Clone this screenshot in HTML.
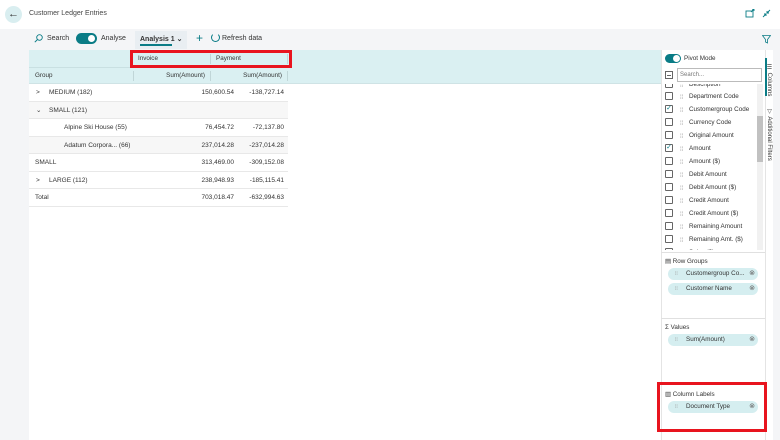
<!DOCTYPE html><html><head><style>
*{box-sizing:border-box;margin:0;padding:0}
body{width:780px;height:440px;overflow:hidden;background:#f4f5f7;font-family:"Liberation Sans",sans-serif;font-size:7px;color:#333;position:relative}
.a{position:absolute}
.hdr{left:0;top:0;width:780px;height:29px;background:#fff}
.grid{left:29px;top:50px;width:632px;height:390px;background:#fff}
.th{background:#daf0f2}
.row{position:absolute;left:29px;width:259px;height:17.5px;border-bottom:1px solid #e8e8e8;font-size:6.5px;line-height:17px}
.row span{position:absolute}
.r1{right:183px;text-align:right} .c1{position:absolute;left:105px;width:100px;text-align:right}
.c2{position:absolute;left:182px;width:73px;text-align:right}
.side{left:661px;top:50px;width:104px;height:390px;background:#fff;border-left:1px solid #e4e4e4}
.it{position:absolute;left:4px;height:13px;font-size:6.3px;line-height:10px}
.cb{position:absolute;left:0;top:0;width:8px;height:8px;border:1px solid #666;border-radius:1px;background:#fff}
.dot{position:absolute;left:15px;top:1px;color:#999;font-size:6px}
.lbl{position:absolute;left:24px;white-space:nowrap}
.chip{position:absolute;left:668px;width:90px;height:12px;border-radius:6px;background:#d5eef0;font-size:6.3px;line-height:12px;padding-left:18px}
.chip:before{content:"⁞⁞";position:absolute;left:7px;color:#999;font-size:5px}
.chip:after{content:"⊗";position:absolute;right:3px;color:#666;font-size:7px}
.red{border:3px solid #e8141e}
</style></head><body>
<div class="a hdr"></div>
<div class="a" style="left:5px;top:6px;width:17px;height:17px;border-radius:50%;background:#d9eef0;text-align:center;line-height:16px;font-size:11px;color:#333">←</div>
<div class="a" style="left:29px;top:10px;font-size:7px;color:#444">Customer Ledger Entries</div>
<svg class="a" style="left:745px;top:9px" width="10" height="9"><rect x="1" y="2" width="7" height="6" fill="none" stroke="#0a7c86" stroke-width="0.9"/><path d="M6 3L9 0M7 0H9V2" stroke="#0a7c86" stroke-width="0.9" fill="none"/></svg>
<svg class="a" style="left:762px;top:9px" width="9" height="9"><path d="M1 8L4 5M2 5H4V7M8 1L5 4M5 2V4H7" stroke="#0a7c86" stroke-width="0.9" fill="none"/></svg>
<!-- toolbar -->
<svg class="a" style="left:34px;top:34px" width="9" height="9"><circle cx="5.5" cy="3.5" r="2.8" fill="none" stroke="#0a7c86" stroke-width="0.9"/><path d="M3.5 5.5L0.8 8.2" stroke="#0a7c86"/></svg>
<div class="a" style="left:47px;top:35px;font-size:7px">Search</div>
<div class="a" style="left:76px;top:33px;width:21px;height:11px;border-radius:6px;background:#0a7c86"></div>
<div class="a" style="left:88px;top:35px;width:7px;height:7px;border-radius:50%;background:#fff"></div>
<div class="a" style="left:101px;top:35px;font-size:7px">Analyse</div>
<div class="a" style="left:135px;top:31px;width:52px;height:18px;background:#e9eef2"></div>
<div class="a" style="left:140px;top:35px;font-size:7px;font-weight:bold">Analysis 1 ⌄</div>
<div class="a" style="left:140px;top:44px;width:32px;height:2px;background:#0a7c86"></div>
<div class="a" style="left:196px;top:31px;font-size:12px;color:#0a7c86">+</div>
<div class="a" style="left:211px;top:33px;width:9px;height:9px;border:1px solid #0a7c86;border-radius:50%;border-top-color:transparent"></div>
<div class="a" style="left:222px;top:35px;font-size:7px">Refresh data</div>
<svg class="a" style="left:762px;top:35px" width="9" height="9"><path d="M0.5 0.5H8.5L5.5 4.5V8L3.5 7V4.5Z" fill="none" stroke="#0a7c86" stroke-width="0.8"/></svg>
<!-- grid -->
<div class="a grid"></div>
<div class="a th" style="left:29px;top:50px;width:632px;height:34px;border-bottom:1px solid #cfe3e5"></div>
<div class="a" style="left:29px;top:67px;width:259px;height:1px;background:#c9e0e2"></div>
<div class="a" style="left:138px;top:55px;font-size:6.3px">Invoice</div>
<div class="a" style="left:210px;top:54px;width:1px;height:10px;background:#c0d6d8"></div>
<div class="a" style="left:216px;top:55px;font-size:6.3px">Payment</div>
<div class="a" style="left:287px;top:54px;width:1px;height:10px;background:#c0d6d8"></div>
<div class="a" style="left:35px;top:72px;font-size:6.3px">Group</div>
<div class="a" style="left:133px;top:71px;width:1px;height:10px;background:#c0d6d8"></div>
<div class="a" style="left:140px;top:72px;width:65px;text-align:right;font-size:6.3px">Sum(Amount)</div>
<div class="a" style="left:210px;top:71px;width:1px;height:10px;background:#c0d6d8"></div>
<div class="a" style="left:215px;top:72px;width:67px;text-align:right;font-size:6.3px">Sum(Amount)</div>
<div class="a" style="left:287px;top:71px;width:1px;height:10px;background:#c0d6d8"></div>
<div class="row" style="top:84px"><span style="left:7px">&gt;</span><span style="left:20px">MEDIUM (182)</span><span class="c1">150,600.54</span><span class="c2">-138,727.14</span></div>
<div class="row" style="top:101.5px;background:#f7f7f7"><span style="left:7px">⌄</span><span style="left:20px">SMALL (121)</span></div>
<div class="row" style="top:119px"><span style="left:35px">Alpine Ski House (55)</span><span class="c1">76,454.72</span><span class="c2">-72,137.80</span></div>
<div class="row" style="top:136.5px;background:#f7f7f7"><span style="left:35px">Adatum Corpora... (66)</span><span class="c1">237,014.28</span><span class="c2">-237,014.28</span></div>
<div class="row" style="top:154px"><span style="left:6px">SMALL</span><span class="c1">313,469.00</span><span class="c2">-309,152.08</span></div>
<div class="row" style="top:171.5px"><span style="left:7px">&gt;</span><span style="left:20px">LARGE (112)</span><span class="c1">238,948.93</span><span class="c2">-185,115.41</span></div>
<div class="row" style="top:189px"><span style="left:6px">Total</span><span class="c1">703,018.47</span><span class="c2">-632,994.63</span></div>
<div class="a red" style="left:130px;top:50px;width:162px;height:18px"></div>
<!-- side -->
<div class="a side"></div>
<div class="a" style="left:765px;top:50px;width:8px;height:390px;background:#fff;border-left:1px solid #e4e4e4"></div>
<div class="a" style="left:765px;top:58px;width:2px;height:38px;background:#0a7c86"></div>
<div class="a" style="left:766px;top:64px;writing-mode:vertical-rl;font-size:6px">☰ Columns</div>
<div class="a" style="left:766px;top:108px;writing-mode:vertical-rl;font-size:6px">▽ Additional Filters</div>
<div class="a" style="left:665px;top:54px;width:16px;height:9px;border-radius:5px;background:#0a7c86"></div>
<div class="a" style="left:673px;top:55px;width:7px;height:7px;border-radius:50%;background:#fff"></div>
<div class="a" style="left:684px;top:55px;font-size:6.3px">Pivot Mode</div>
<div class="a" style="left:665px;top:71px;width:8px;height:8px;border:1px solid #666"></div>
<div class="a" style="left:667px;top:74.5px;width:4px;height:1px;background:#666"></div>
<div class="a" style="left:677px;top:68px;width:85px;height:14px;border:1px solid #bbb;font-size:6px;color:#777;padding:3px 2px">Search...</div>
<div class="a" style="left:661px;top:84px;width:96px;height:166px;overflow:hidden">
<div class="it" style="top:-4px"><div class="cb"></div><span class="dot">⁞⁞</span><span class="lbl">Description</span></div>
<div class="it" style="top:8px"><div class="cb"></div><span class="dot">⁞⁞</span><span class="lbl">Department Code</span></div>
<div class="it" style="top:21px"><div class="cb" style="color:#0a7c86;font-size:7px;line-height:6px;text-align:center">✓</div><span class="dot">⁞⁞</span><span class="lbl">Customergroup Code</span></div>
<div class="it" style="top:34px"><div class="cb"></div><span class="dot">⁞⁞</span><span class="lbl">Currency Code</span></div>
<div class="it" style="top:47px"><div class="cb"></div><span class="dot">⁞⁞</span><span class="lbl">Original Amount</span></div>
<div class="it" style="top:60px"><div class="cb" style="color:#0a7c86;font-size:7px;line-height:6px;text-align:center">✓</div><span class="dot">⁞⁞</span><span class="lbl">Amount</span></div>
<div class="it" style="top:73px"><div class="cb"></div><span class="dot">⁞⁞</span><span class="lbl">Amount ($)</span></div>
<div class="it" style="top:86px"><div class="cb"></div><span class="dot">⁞⁞</span><span class="lbl">Debit Amount</span></div>
<div class="it" style="top:99px"><div class="cb"></div><span class="dot">⁞⁞</span><span class="lbl">Debit Amount ($)</span></div>
<div class="it" style="top:112px"><div class="cb"></div><span class="dot">⁞⁞</span><span class="lbl">Credit Amount</span></div>
<div class="it" style="top:125px"><div class="cb"></div><span class="dot">⁞⁞</span><span class="lbl">Credit Amount ($)</span></div>
<div class="it" style="top:138px"><div class="cb"></div><span class="dot">⁞⁞</span><span class="lbl">Remaining Amount</span></div>
<div class="it" style="top:151px"><div class="cb"></div><span class="dot">⁞⁞</span><span class="lbl">Remaining Amt. ($)</span></div>
<div class="it" style="top:164px"><div class="cb"></div><span class="dot">⁞⁞</span><span class="lbl">Sales ($)</span></div>
</div>
<div class="a" style="left:757px;top:84px;width:6px;height:166px;background:#f1f1f1"></div>
<div class="a" style="left:757px;top:116px;width:6px;height:46px;background:#c1c1c1"></div>
<div class="a" style="left:661px;top:252px;width:104px;height:1px;background:#e0e0e0"></div>
<div class="a" style="left:665px;top:258px;font-size:6.3px">▤ Row Groups</div>
<div class="chip" style="top:268px">Customergroup Co...</div>
<div class="chip" style="top:283px">Customer Name</div>
<div class="a" style="left:661px;top:318px;width:104px;height:1px;background:#e0e0e0"></div>
<div class="a" style="left:665px;top:324px;font-size:6.3px">Σ Values</div>
<div class="chip" style="top:334px">Sum(Amount)</div>
<div class="a" style="left:665px;top:391px;font-size:6.3px">▥ Column Labels</div>
<div class="chip" style="top:401px">Document Type</div>
<div class="a red" style="left:657px;top:382px;width:110px;height:50px"></div>
</body></html>
